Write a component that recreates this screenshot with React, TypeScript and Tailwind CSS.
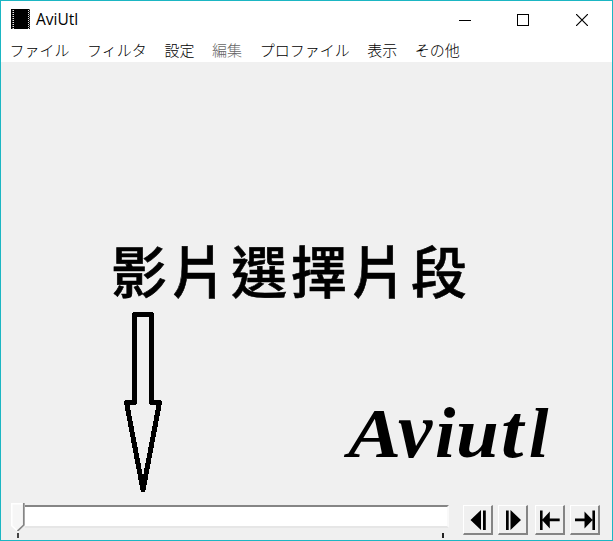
import React from "react";

const menuItems = [
  { label: "ファイル" },
  { label: "フィルタ" },
  { label: "設定" },
  { label: "編集", disabled: true },
  { label: "プロファイル" },
  { label: "表示" },
  { label: "その他" },
];

// Each letter of the brush-style wordmark has its own advance and stretch.
const wordmark = [
  { letter: "A", style: "w-[50px] scale-x-[1.14]" },
  { letter: "v", style: "w-[37px] scale-x-[1.1] scale-y-[1.16]" },
  { letter: "i", style: "w-[21px] scale-x-[1.05] scale-y-[1.04]" },
  { letter: "u", style: "w-[45px] scale-x-[1.1] scale-y-[1.04]" },
  { letter: "t", style: "w-[28px] scale-x-[1.15] scale-y-[1.1]" },
  { letter: "l", style: "w-[20px] scale-x-[1]" },
];

function FilmIcon() {
  return (
    <svg width="20" height="20" viewBox="0 0 20 20" shapeRendering="crispEdges">
      <rect x="0" width="19" height="20" fill="#000" />
      <path d="M2.5 1V20M17.5 1V20" stroke="#e8e8e8" strokeWidth="1" strokeDasharray="1 1" />
      <path d="M1.5 1V20M18.5 0V20" stroke="#777" strokeWidth="1" strokeDasharray="1 1" />
    </svg>
  );
}

function TitleBar() {
  return (
    <header className="flex h-[37px] bg-white pl-[10px]">
      <div className="flex h-[36px] items-center gap-[5px]">
        <FilmIcon />
        <h1 className="font-['Open_Sans','Noto_Sans',sans-serif] text-[15.5px] leading-[36px]">AviUtl</h1>
      </div>
      <div className="mr-[1px] ml-auto flex text-black">
        <button className="flex h-[38px] w-[58px] items-center justify-center" aria-label="Minimize">
          <svg width="12" height="12" shapeRendering="crispEdges"><path d="M0 6.5H12" stroke="currentColor" /></svg>
        </button>
        <button className="flex h-[38px] w-[58px] items-center justify-center" aria-label="Maximize">
          <svg width="12" height="12" shapeRendering="crispEdges"><rect x=".5" y=".5" width="11" height="11" fill="none" stroke="currentColor" /></svg>
        </button>
        <button className="flex h-[38px] w-[59px] items-center justify-center" aria-label="Close">
          <svg width="12" height="12"><path d="M0 0L12 12M12 0L0 12" stroke="currentColor" strokeWidth="1.2" /></svg>
        </button>
      </div>
    </header>
  );
}

function MenuBar() {
  return (
    <nav className="flex h-[24px] gap-[17.6px] bg-white pl-[8.5px] font-['Noto_Sans_CJK_JP',sans-serif] text-[15px] leading-[23px] font-light whitespace-nowrap">
      {menuItems.map((item) => (
        <span key={item.label} className={item.disabled ? "text-[#666]" : "text-black"}>{item.label}</span>
      ))}
    </nav>
  );
}

function ToolButton({ children, label }: { children: React.ReactNode; label: string }) {
  return (
    <button
      aria-label={label}
      className="h-[30px] w-[30px] border-t border-r-2 border-b-2 border-l border-t-white border-r-[#858585] border-b-[#858585] border-l-white bg-[#f0f0f0]"
    >
      <svg width="27" height="27" viewBox="0 0 27 27" fill="#000">{children}</svg>
    </button>
  );
}

function SeekBar() {
  return (
    <div className="flex w-[440px] flex-col">
      <div className="flex h-[28px]">
        <svg width="14" height="28" viewBox="0 0 14 28" className="shrink-0">
          <path d="M0 0H13V22L6.5 28L0 22Z" fill="#f6f6f6" />
          <path d="M.75 22V.75H12" fill="none" stroke="#fff" strokeWidth="1.5" />
          <path d="M0 22L6 27.5" stroke="#fff" strokeWidth="1.5" />
          <path d="M12.8 0V22L6.5 28" fill="none" stroke="#858585" strokeWidth="1.7" />
        </svg>
        <div className="mt-[2px] h-[23px] w-[424px] border-t-2 border-r-2 border-b-2 border-t-[#858585] border-r-[#f9f9f9] border-b-[#e6e6e6] bg-white" />
      </div>
      <div className="mt-[2px] flex h-[5px] justify-between pr-[7px] pl-[6px]">
        <i className="w-[2px] bg-[#444]" />
        <i className="w-[2px] bg-[#222]" />
      </div>
    </div>
  );
}

export default function App() {
  return (
    <main className="flex h-[541px] w-[613px] flex-col overflow-hidden border border-[#1bb6c3] bg-[#f0f0f0] text-black">
      <TitleBar />
      <MenuBar />
      <section className="flex h-[441px] flex-col">
        <p className="mt-[167px] ml-[110px] h-[83px] font-['Noto_Sans_CJK_TC',sans-serif] text-[56px] leading-[80px] font-medium tracking-[4px] whitespace-nowrap [-webkit-text-stroke:0.6px_black]">影片選擇片段</p>
        <div className="flex h-[190px]">
          <svg width="40" height="184" viewBox="0 0 40 184" className="ml-[123px]" shapeRendering="crispEdges">
            <path d="M10.5 2.5H27.5V90.5H35.5L19 178L2.5 90.5H10.5Z" fill="none" stroke="#000" strokeWidth="5" strokeLinejoin="round" />
          </svg>
          <p className="mt-[82px] ml-[184px] flex h-[80px] font-['Liberation_Serif',serif] text-[70px] leading-[80px] font-bold italic whitespace-nowrap">
            {wordmark.map(({ letter, style }) => (
              <span key={letter} className={`block shrink-0 origin-[0_63px] ${style}`}>{letter}</span>
            ))}
          </p>
        </div>
      </section>
      <footer className="flex h-[37px] pl-[10px]">
        <SeekBar />
        <div className="mt-[2px] ml-[12px] flex">
          <ToolButton label="Previous frame"><path d="M17 4V24L6.5 14ZM19 4.5H21.8V24H19Z" /></ToolButton>
          <div className="w-[5px]" />
          <ToolButton label="Next frame"><path d="M7 4.5H9.7V24H7ZM11.5 4V24L22 14Z" /></ToolButton>
          <div className="w-[7px]" />
          <ToolButton label="First frame"><path d="M4 4.5H6.6V24H4ZM23.7 12.6V15.2H13.8V22.5L6 14L13.8 5.5V12.6Z" /></ToolButton>
          <div className="w-[5px]" />
          <ToolButton label="Last frame"><path d="M21.4 4.5H24V24H21.4ZM4 12.6H13.5V5.5L21.6 14L13.5 22.5V15.2H4Z" /></ToolButton>
        </div>
      </footer>
    </main>
  );
}
